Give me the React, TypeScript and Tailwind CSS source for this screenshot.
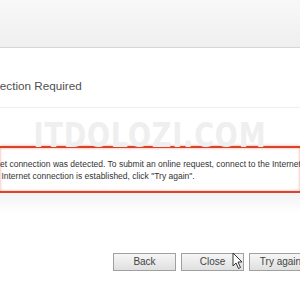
export default function App() {
  return (
    <div className="relative w-[300px] h-[300px] overflow-hidden bg-white font-['Liberation_Sans',Arial,sans-serif]">
      {/* top bar */}
      <div className="h-[48px] bg-gradient-to-b from-[#f8f8f8] to-[#efefef] border-b border-[#d6d6d6]" />

      {/* title */}
      <div className="h-[59px] pt-[30px] whitespace-nowrap">
        <div className="ml-[-71px] text-[11.7px] leading-[15px] text-[#505050]">
          Internet Connection Required
        </div>
      </div>
      <div className="h-px bg-[#efefef]" />

      {/* message box */}
      <div className="mt-[38px] border-y-2 border-[#d8432c] shadow-[0_0_3px_#f2a090,inset_0_0_3px_#f2a090] pt-[10px] h-[47px]">
        <div className="whitespace-nowrap text-[8.5px] leading-[12px] text-[#333]">
          <div className="ml-[-35px]">
            No Internet connection was detected. To submit an online request, connect to the Internet
          </div>
          <div className="ml-[-52px]">
            and, when an Internet connection is established, click "Try again".
          </div>
        </div>
      </div>
      <div className="h-[20px] bg-gradient-to-b from-[#f2f2f2] to-white" />

      {/* buttons */}
      <div className="mt-[40px] flex gap-[5px] pl-[113px] text-[10px] text-[#444]">
        {['Back', 'Close', 'Try again'].map(label => (
          <button
            key={label}
            className="w-[63px] h-[18px] shrink-0 border border-[#a0a0a0] bg-gradient-to-b from-[#f6f6f6] to-[#e0e0e0] leading-[16px] text-center"
          >
            {label}
          </button>
        ))}
      </div>

      {/* mouse cursor */}
      <svg className="absolute left-[232px] top-[252px]" width="11" height="18" viewBox="0 0 11 18">
        <path d="M1 1 L1 14 L4 11 L6.5 16.5 L8.5 15.5 L6 10 L10 10 Z" fill="#fff" stroke="#333" strokeWidth="1" strokeLinejoin="round" />
      </svg>

      {/* watermark */}
      <div className="absolute left-[0px] top-[118px] w-[300px] text-center text-[33px] leading-[36px] font-black text-[#efefef] scale-x-[0.82] tracking-[1px] font-['DejaVu_Sans',sans-serif] pointer-events-none">
        ITDOLOZI.COM
      </div>
    </div>
  );
}
